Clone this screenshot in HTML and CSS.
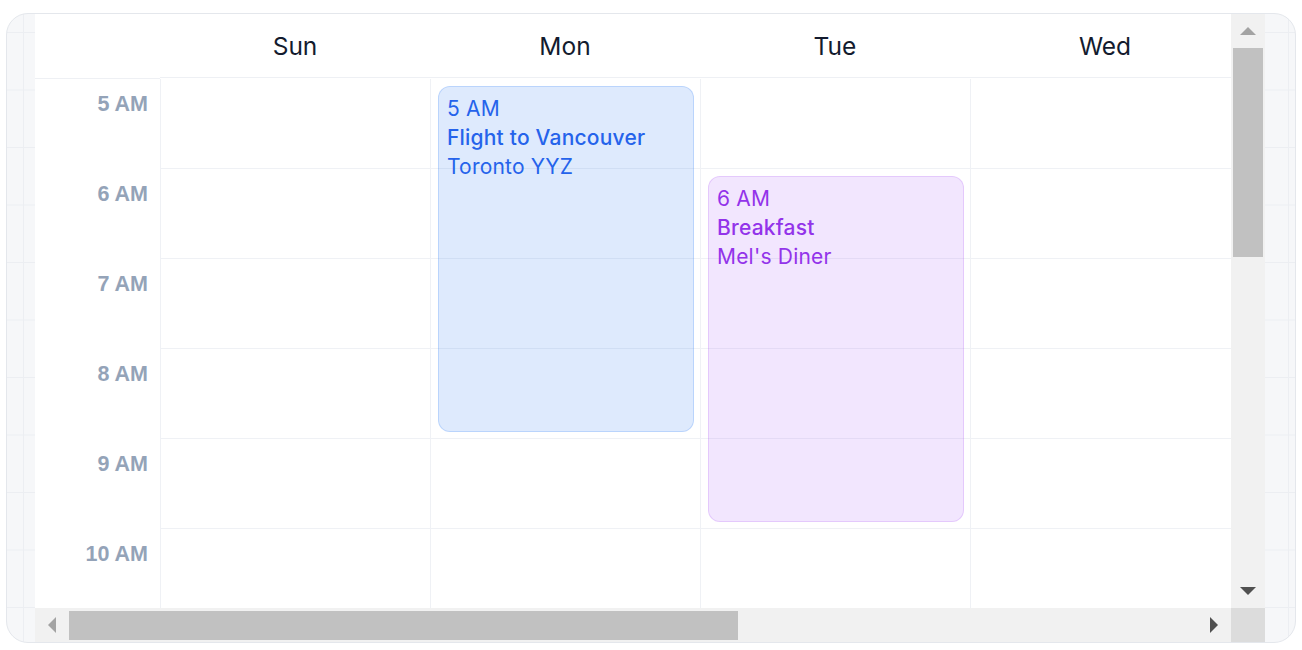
FILE: index.html
```html
<!DOCTYPE html>
<html lang="en">
<head>
<meta charset="utf-8">
<title>Week calendar</title>
<link rel="stylesheet" href="styles.css">
</head>
<body>
<div class="card">
  <div class="scroller">
    <div class="viewport">
      <div class="cal">
        <div class="corner"></div>
        <div class="day-head">Sun</div>
        <div class="day-head">Mon</div>
        <div class="day-head">Tue</div>
        <div class="day-head">Wed</div>

        <div class="times">
          <div class="time">5 AM</div>
          <div class="time">6 AM</div>
          <div class="time">7 AM</div>
          <div class="time">8 AM</div>
          <div class="time">9 AM</div>
          <div class="time">10 AM</div>
        </div>

        <div class="day"><div class="slots"><i></i><i></i><i></i><i></i><i></i><i></i></div></div>
        <div class="day">
          <div class="slots"><i></i><i></i><i></i><i></i><i></i><i></i></div>
          <div class="event blue" style="top:7px;height:346px">
            <div class="ev-time">5 AM</div>
            <div class="ev-title">Flight to Vancouver</div>
            <div class="ev-loc">Toronto YYZ</div>
          </div>
        </div>
        <div class="day">
          <div class="slots"><i></i><i></i><i></i><i></i><i></i><i></i></div>
          <div class="event purple" style="top:97px;height:346px">
            <div class="ev-time">6 AM</div>
            <div class="ev-title">Breakfast</div>
            <div class="ev-loc">Mel's Diner</div>
          </div>
        </div>
        <div class="day"><div class="slots"><i></i><i></i><i></i><i></i><i></i><i></i></div></div>
      </div>
    </div>

    <div class="vbar">
      <div class="sb-btn">
        <svg width="16" height="8" viewBox="0 0 16 8"><path d="M0 8L8 0L16 8Z" fill="#a3a3a3"/></svg>
      </div>
      <div class="sb-track v">
        <div class="sb-thumb v" style="height:209px"></div>
      </div>
      <div class="sb-btn">
        <svg width="16" height="8" viewBox="0 0 16 8"><path d="M0 0L16 0L8 8Z" fill="#505050"/></svg>
      </div>
    </div>

    <div class="hbar">
      <div class="sb-btn">
        <svg width="8" height="16" viewBox="0 0 8 16"><path d="M8 0L8 16L0 8Z" fill="#a3a3a3"/></svg>
      </div>
      <div class="sb-track h">
        <div class="sb-thumb h" style="width:669px"></div>
      </div>
      <div class="sb-btn">
        <svg width="8" height="16" viewBox="0 0 8 16"><path d="M0 0L8 8L0 16Z" fill="#505050"/></svg>
      </div>
    </div>

    <div class="sb-corner"></div>
  </div>
</div>
</body>
</html>
```
FILE: styles.css
```css
html, body {
  margin: 0;
  padding: 0;
  background: #ffffff;
}

body {
  font-family: "Liberation Sans", Arial, sans-serif;
}

.card {
  box-sizing: border-box;
  width: 1290px;
  height: 630px;
  margin: 13px 0 0 6px;
  padding: 0 30px 0 28px;
  border: 1px solid #e4e7ec;
  border-radius: 22px;
  overflow: hidden;
  background-color: #f6f7f9;
  background-image:
    linear-gradient(to right, #eceef2 1px, transparent 1px),
    linear-gradient(to bottom, #eceef2 1px, transparent 1px);
  background-size: 57.5px 57.5px;
  background-position: 16px 18px;
}

.scroller {
  display: grid;
  grid-template-columns: 1fr 34px;
  grid-template-rows: 1fr 34px;
  height: 628px;
  background: #ffffff;
}

.viewport {
  overflow: hidden;
  min-width: 0;
  min-height: 0;
}

/* scrollbars */
.vbar,
.hbar {
  display: flex;
  background: #f1f1f1;
}

.vbar {
  flex-direction: column;
}

.sb-btn {
  flex: 0 0 34px;
  width: 34px;
  height: 34px;
  display: flex;
  align-items: center;
  justify-content: center;
}

.sb-btn svg {
  display: block;
}

.sb-track {
  flex: 1;
  display: flex;
}

.sb-track.v {
  flex-direction: column;
  padding: 0 2px;
}

.sb-track.h {
  padding: 3px 0 2px;
}

.sb-thumb {
  background: #c1c1c1;
  flex: none;
}

.sb-corner {
  background: #dcdcdc;
}

/* calendar */
.cal {
  display: grid;
  grid-template-columns: 125px repeat(4, 270px);
  width: 1205px;
}

.corner,
.day-head {
  height: 64px;
  background: #ffffff;
  border-bottom: 1px solid #eef0f4;
}

.day-head {
  display: flex;
  align-items: center;
  justify-content: center;
  padding-top: 0;
  box-sizing: border-box;
  font-family: Inter, "Noto Sans", sans-serif;
  font-size: 24.5px;
  font-weight: 400;
  color: #131b2e;
}

.times {
  background: #ffffff;
}

.time {
  box-sizing: border-box;
  height: 90px;
  padding: 13px 12px 0 0;
  text-align: right;
  font-family: "Liberation Sans", Arial, sans-serif;
  font-size: 21.5px;
  line-height: 24px;
  font-weight: 700;
  color: #94a3b8;
}

.day {
  position: relative;
  border-left: 1px solid #eff1f5;
}

.slots i {
  display: block;
  height: 89px;
  border-bottom: 1px solid #eff1f5;
}

.event {
  position: absolute;
  left: 7px;
  width: 256px;
  box-sizing: border-box;
  padding: 7px 8px;
  border-radius: 12px;
  font-family: Inter, "Noto Sans", sans-serif;
  font-size: 21px;
  line-height: 29px;
  letter-spacing: 0.2px;
}

.event.blue {
  background: rgba(59, 130, 246, 0.17);
  border: 1px solid rgba(59, 130, 246, 0.22);
  color: #2563eb;
}

.event.purple {
  background: rgba(168, 85, 247, 0.15);
  border: 1px solid rgba(168, 85, 247, 0.2);
  color: #9333ea;
}

.ev-title {
  font-weight: 500;
}
```
